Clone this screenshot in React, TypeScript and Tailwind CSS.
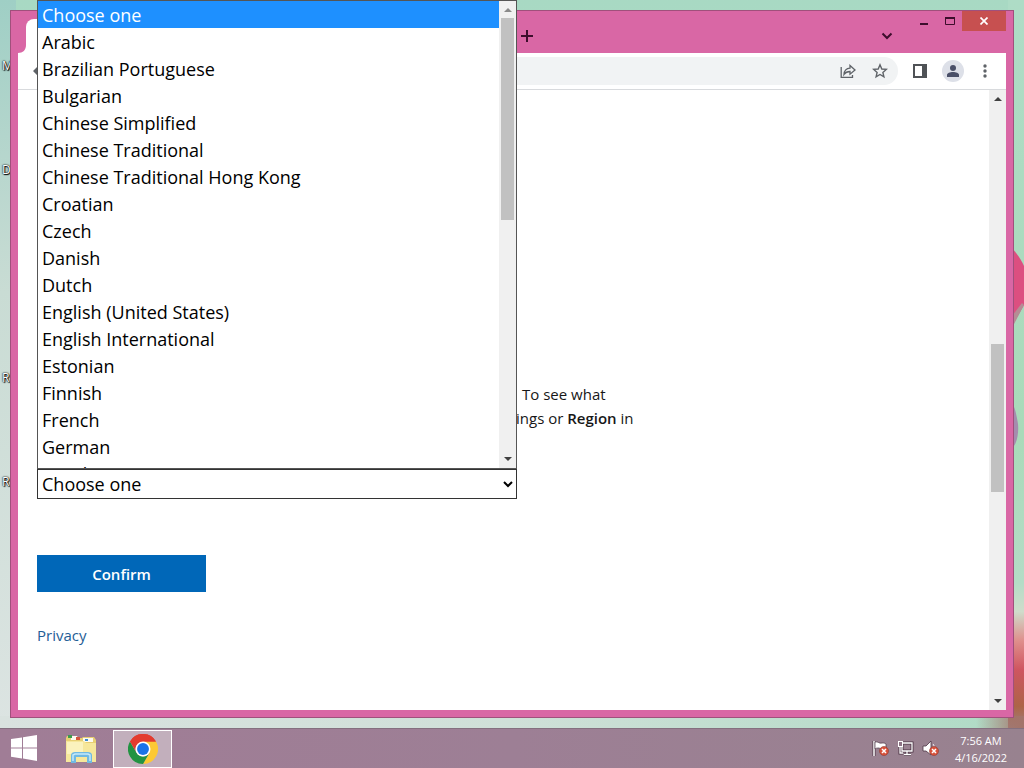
import React, { useState } from 'react';

const languages = [
  'Choose one',
  'Arabic',
  'Brazilian Portuguese',
  'Bulgarian',
  'Chinese Simplified',
  'Chinese Traditional',
  'Chinese Traditional Hong Kong',
  'Croatian',
  'Czech',
  'Danish',
  'Dutch',
  'English (United States)',
  'English International',
  'Estonian',
  'Finnish',
  'French',
  'German',
  'Greek',
];

const Arrow = ({ up = false, color = '#404040' }: { up?: boolean; color?: string }) => (
  <svg width="8" height="4" viewBox="0 0 8 4" aria-hidden="true">
    <path d={up ? 'M0 4L4 0L8 4Z' : 'M0 0L4 4L8 0Z'} fill={color} />
  </svg>
);

const Wallpaper = () => (
  <div className="absolute inset-0 overflow-hidden bg-gradient-to-b from-[#a8d9c3] to-[#bfdccf]">
    <div className="absolute inset-y-0 left-0 w-4 bg-gradient-to-b from-[#9fcfc5] via-[#c9dcd4] via-40% to-[#dce4e2]" />
    <div className="absolute bottom-0 left-0 h-3 w-full bg-gradient-to-r from-[#d9e2df] via-[#cfe0d8] to-[#aedbc5]" />
    <svg className="absolute inset-y-0 right-0 h-full" width="16" height="728" viewBox="0 0 16 728" aria-hidden="true">
      <defs>
        <linearGradient id="side" x1="0" y1="0" x2="0" y2="1">
          <stop offset="0" stopColor="#aedcc6" />
          <stop offset="0.6" stopColor="#a9dab9" />
          <stop offset="0.8" stopColor="#b4dcc6" />
          <stop offset="0.84" stopColor="#cfdccb" />
          <stop offset="0.88" stopColor="#df8f8c" />
          <stop offset="0.92" stopColor="#cf5560" />
          <stop offset="0.97" stopColor="#ad6447" />
          <stop offset="1" stopColor="#a0807c" />
        </linearGradient>
      </defs>
      <rect width="16" height="728" fill="url(#side)" />
      <path d="M4 248C9 254 13 259 16 266V305L4 326Z" fill="#dc4f80" />
      <path d="M4 316L14 303L16 305L4 328Z" fill="#b58c94" />
      <path d="M4 405C6 404 8 412 10 424C11 436 8 444 5 447Z" fill="#a58cae" />
    </svg>
    <div className="absolute bottom-0 right-0 h-3 w-12 bg-gradient-to-r from-transparent to-[#a3746a]" />
  </div>
);

const desktopLabels = [
  { text: 'M', top: 'top-[58px]' },
  { text: 'D', top: 'top-[162px]' },
  { text: 'R', top: 'top-[370px]' },
  { text: 'R', top: 'top-[474px]' },
];

const TitleBar = () => (
  <div className="flex h-[42px] items-start text-[#3d0d2c]">
    <div className="relative ml-2 mt-2 h-[34px] w-[484px] rounded-t-lg bg-white">
      <svg className="absolute -left-2 bottom-0" width="8" height="8" viewBox="0 0 8 8" aria-hidden="true">
        <path d="M8 0V8H0C5 8 8 5 8 0Z" fill="#fff" />
      </svg>
    </div>
    <button aria-label="New tab" className="ml-[9px] mt-[17px]">
      <svg width="16" height="16" viewBox="0 0 16 16">
        <path d="M8 2V14M2 8H14" stroke="currentColor" strokeWidth="2" />
      </svg>
    </button>
    <button aria-label="Search tabs" className="ml-auto mr-[17px] mt-[17px]">
      <svg width="16" height="16" viewBox="0 0 16 16">
        <path d="M3.500 5.500L8 10L12.500 5.500" fill="none" stroke="currentColor" strokeWidth="2" />
      </svg>
    </button>
    <button aria-label="Minimize" className="mr-3 mt-[5px]">
      <svg width="16" height="16" viewBox="0 0 16 16">
        <rect x="8" y="7" width="8" height="2" fill="currentColor" />
      </svg>
    </button>
    <button aria-label="Maximize" className="mr-1.5 mt-[5px]">
      <svg width="16" height="16" viewBox="0 0 16 16">
        <path d="M5.500 1.500H14.500V8.500H5.500Z" fill="none" stroke="currentColor" />
        <path d="M5 2H15" stroke="currentColor" strokeWidth="2" />
      </svg>
    </button>
    <button aria-label="Close" className="flex h-5 w-11 items-center justify-center bg-[#c75050]">
      <svg width="8" height="8" viewBox="0 0 8 8">
        <path d="M0.500 0.500L7.500 7.500M7.500 0.500L0.500 7.500" stroke="#fff" strokeWidth="1.700" />
      </svg>
    </button>
  </div>
);

const Toolbar = () => (
  <div className="flex h-[37px] items-center border-b border-[#d8dadd] bg-white text-[#5f6368]">
    <button aria-label="Back" className="ml-3">
      <svg width="20" height="20" viewBox="0 0 20 20">
        <path d="M17 9H7L11 5L9.500 3.500L3 10L9.500 16.500L11 15L7 11H17Z" fill="currentColor" />
      </svg>
    </button>
    <div className="ml-16 flex h-7 flex-1 items-center justify-end gap-4 rounded-full bg-[#f1f3f4] pr-2.5">
      <button aria-label="Share this page">
        <svg width="16" height="16" viewBox="0 0 16 16" fill="none" stroke="currentColor" strokeWidth="1.300">
          <path d="M1.200 4V14.300H12.500V12" />
          <path d="M4 11.500C4.300 7.500 6.500 5.400 10 5.200V2.500L15 7L10 11.200V8.500C7.300 8.500 5.500 9.300 4 11.500Z" />
        </svg>
      </button>
      <button aria-label="Bookmark this page">
        <svg width="16" height="16" viewBox="0 0 16 16" fill="none" stroke="currentColor" strokeWidth="1.400">
          <path d="M8 1.800L9.800 6L14.300 6.400L10.900 9.400L11.900 13.900L8 11.500L4.100 13.900L5.100 9.400L1.700 6.400L6.200 6Z" />
        </svg>
      </button>
    </div>
    <button aria-label="Side panel" className="ml-3.5">
      <svg width="16" height="16" viewBox="0 0 16 16">
        <path d="M1 1H15V15H1ZM3 3V13H10V3Z" fill="#4f5256" fillRule="evenodd" />
      </svg>
    </button>
    <button aria-label="Profile" className="ml-3.5">
      <svg width="22" height="22" viewBox="0 0 22 22">
        <circle cx="11" cy="11" r="11" fill="#dde0e8" />
        <circle cx="11" cy="8" r="3" fill="#4a5068" />
        <path d="M5 17V15C5 13 8 12 11 12C14 12 17 13 17 15V17Z" fill="#4a5068" />
      </svg>
    </button>
    <button aria-label="Menu" className="ml-3.5 mr-3">
      <svg width="16" height="16" viewBox="0 0 16 16" fill="currentColor">
        <circle cx="7" cy="3" r="1.700" />
        <circle cx="7" cy="8" r="1.700" />
        <circle cx="7" cy="13" r="1.700" />
      </svg>
    </button>
  </div>
);

const LanguageSelect = () => {
  const [value, setValue] = useState(languages[0]);

  return (
    <div className="relative w-[480px]">
      <select
        aria-label="Product language"
        value={value}
        onChange={(e) => setValue(e.target.value)}
        className="h-[30px] w-full border border-[#333] bg-white text-lg text-black"
      >
        {languages.map((language) => (
          <option key={language}>{language}</option>
        ))}
      </select>

      {/* Open list, drawn above the box */}
      <div className="absolute bottom-full left-0 flex h-[469px] w-full overflow-hidden border border-[#555] bg-white">
        <ul role="listbox" aria-label="Languages" className="flex-1 text-lg text-black">
          {languages.map((language) => (
            <li
              key={language}
              role="option"
              aria-selected={language === value}
              onClick={() => setValue(language)}
              className={`h-[27px] pl-1 leading-[29px] ${language === value ? 'bg-[#1e90ff] text-white' : ''}`}
            >
              {language}
            </li>
          ))}
        </ul>
        <div className="flex w-[17px] flex-col items-center bg-[#f0f0f0]">
          <div className="flex h-[17px] items-center">
            <Arrow up color="#8a8a8a" />
          </div>
          <div className="h-[202px] w-[13px] bg-[#c1c1c1]" />
          <div className="mt-auto flex h-[18px] items-center">
            <Arrow />
          </div>
        </div>
      </div>
    </div>
  );
};

const PageContent = () => (
  <main className="flex min-h-0 flex-1 bg-white">
    <div className="flex-1 pl-[19px] pt-[292px]">
      <p className="pl-[479px] text-[15px] leading-6 text-[#171717]">
        <span className="block pl-1.5">To see what</span>
        <span className="block">
          ings or <b className="font-semibold">Region</b> in
        </span>
      </p>
      <form className="mt-[39px]" onSubmit={(e) => e.preventDefault()}>
        <LanguageSelect />
        <button className="mt-14 block h-[37px] w-[169px] bg-[#0067b8] pt-0.5 text-[15px] font-semibold text-white">
          Confirm
        </button>
      </form>
      <a href="#privacy" className="mt-[31px] inline-block text-[15px] font-medium leading-6 text-[#1f5d96]">
        Privacy
      </a>
    </div>
    <div className="flex w-[17px] flex-col items-center bg-[#f0f0f0]">
      <div className="flex h-[17px] items-center">
        <Arrow up />
      </div>
      <div className="mt-[237px] h-[148px] w-[13px] bg-[#c1c1c1]" />
      <div className="mt-auto flex h-[18px] items-center">
        <Arrow />
      </div>
    </div>
  </main>
);

const RedCross = () => (
  <>
    <circle cx="12" cy="11" r="4.500" fill="#d9533c" stroke="#8f3a34" strokeWidth="0.600" />
    <path d="M10 9L14 13M14 9L10 13" stroke="#fff" strokeWidth="1.500" />
  </>
);

const Taskbar = () => (
  <footer className="flex h-10 items-center border-t border-[#84707f] bg-gradient-to-r from-[#a07d96] via-[#9d7f95] to-[#98828f]">
    <button aria-label="Start" className="ml-2.5">
      <svg width="28" height="28" viewBox="0 0 28 28" fill="#fff">
        <path d="M1 4L12 2.400V12.400H1ZM13 2.200L27 0V12.400H13ZM1 13.400H12V23.400L1 21.800ZM13 13.400H27V26L13 23.600Z" />
      </svg>
    </button>
    <button aria-label="File Explorer" className="ml-[27px]">
      <svg width="32" height="30" viewBox="0 0 32 30">
        <path d="M1 4L2 2H11L12 4H17L18 3H29L31 6V28H1Z" fill="#e8cf73" />
        <path d="M6 2H12L14 6H6ZM18 4H28V8H18Z" fill="#fdfaf0" />
        <path d="M3 1H7V4H3Z" fill="#3c9a4f" />
        <path d="M11 3H15V6H11Z" fill="#d6553c" />
        <path d="M20 5H23V7H20Z" fill="#3d8cd0" />
        <path d="M1 7H19L21 9H31V28H1Z" fill="#f6e79b" />
        <path d="M2 8H18V20H2Z" fill="#fbf2bd" />
        <path d="M6 29V21C6 19 8 18 10 18H23C25 18 27 19 27 21V29H22V23H11V29Z" fill="#6fb9e2" />
        <path d="M8 27V21L10 20H23L25 21V27" fill="none" stroke="#c3e9fa" strokeWidth="1.500" />
      </svg>
    </button>
    <button
      aria-label="Google Chrome"
      className="ml-4 flex h-[38px] w-[59px] items-center justify-center border border-white bg-[#c2afbc]"
    >
      <svg width="30" height="30" viewBox="0 0 48 48">
        <path d="M24 24L3.200 12A24 24 0 0 1 44.800 12Z" fill="#e33b2e" />
        <path d="M24 12H44.800A24 24 0 0 1 24 48L34.400 30Z" fill="#fcc934" />
        <path d="M3.200 12L13.600 30A12 12 0 0 0 34.400 30L24 48A24 24 0 0 1 3.200 12Z" fill="#229342" />
        <path d="M3.200 12A24 24 0 0 1 44.800 12H24A12 12 0 0 0 13.600 30Z" fill="#e33b2e" />
        <circle cx="24" cy="24" r="12" fill="#fff" />
        <circle cx="24" cy="24" r="9.500" fill="#1a73e8" />
      </svg>
    </button>

    <div className="ml-auto mr-[17px] flex items-center gap-2">
      <svg width="17" height="17" viewBox="0 0 17 17" aria-hidden="true">
        <path d="M2 1V16" stroke="#4c3545" strokeWidth="3" />
        <path d="M2 1V16" stroke="#fff" strokeWidth="1.500" />
        <path d="M3 2C6 1 7 4 10 3C12 3 13 3 14 4V9C11 8 10 10 7 8C5 8 4 8 3 9Z" fill="#fff" stroke="#4c3545" strokeWidth="0.700" />
        <RedCross />
      </svg>
      <svg width="17" height="17" viewBox="0 0 17 17" fill="none" aria-hidden="true">
        <path d="M5 3H15V11H5ZM10 11V14M7 14.500H14M3 6V13H6" stroke="#4c3545" strokeWidth="3" />
        <path d="M5 3H15V11H5ZM10 11V14M7 14.500H14M3 6V13H6" stroke="#fff" strokeWidth="1.300" />
        <rect x="1.500" y="1.500" width="4" height="5" fill="#8d7385" stroke="#fff" />
      </svg>
      <svg width="17" height="17" viewBox="0 0 17 17" aria-hidden="true">
        <path d="M1 6H4L9 1V15L4 11H1Z" fill="#fff" stroke="#4c3545" strokeWidth="0.800" />
        <path d="M11 4C12 5 12 6 12 7" stroke="#fff" fill="none" />
        <RedCross />
      </svg>
      <div className="ml-2 text-center text-[11px] leading-[17px] text-white">
        <div>7:56 AM</div>
        <div>4/16/2022</div>
      </div>
    </div>
  </footer>
);

export default function App() {
  return (
    <div className="flex h-screen flex-col overflow-hidden font-['Open_Sans','Noto_Sans',sans-serif]">
      <div className="relative flex min-h-0 flex-1 flex-col">
        <Wallpaper />
        {desktopLabels.map((label) => (
          <span
            key={label.top}
            className={`absolute left-0.5 text-xs leading-4 text-white [text-shadow:0_0_2px_#000,0_0_1px_#000,1px_1px_1px_#000] ${label.top}`}
          >
            {label.text}
          </span>
        ))}

        {/* Browser window */}
        <div className="relative m-2.5 flex min-h-0 flex-1 flex-col border border-[#a0507c] bg-[#d967a5] px-[7px] pb-[7px]">
          <TitleBar />
          <Toolbar />
          <PageContent />
        </div>
      </div>
      <Taskbar />
    </div>
  );
}
